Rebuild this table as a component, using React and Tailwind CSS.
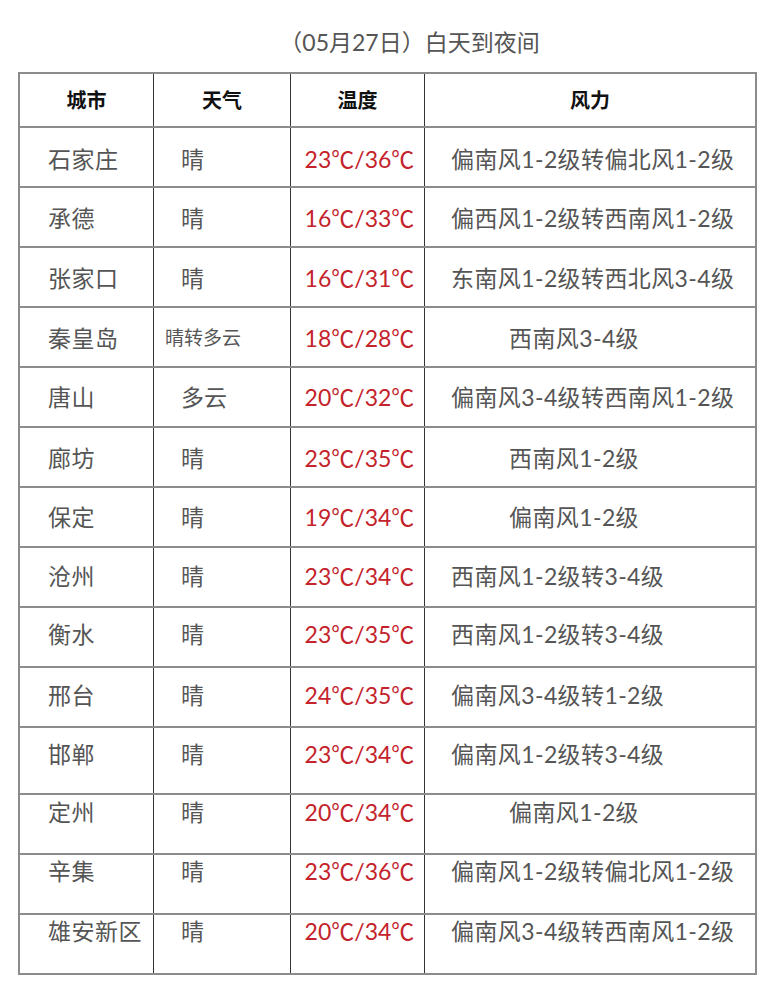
const rows = [
  { city: "石家庄", weather: "晴", temp: "23℃/36℃", wind: "偏南风1-2级转偏北风1-2级", pt: "pt-[16px]" },
  { city: "承德", weather: "晴", temp: "16℃/33℃", wind: "偏西风1-2级转西南风1-2级", pt: "pt-[15px]" },
  { city: "张家口", weather: "晴", temp: "16℃/31℃", wind: "东南风1-2级转西北风3-4级", pt: "pt-[15px]" },
  { city: "秦皇岛", weather: "晴转多云", temp: "18℃/28℃", wind: "西南风3-4级", indent: true, small: true, pt: "pt-[15px]" },
  { city: "唐山", weather: "多云", temp: "20℃/32℃", wind: "偏南风3-4级转西南风1-2级", pt: "pt-[14px]" },
  { city: "廊坊", weather: "晴", temp: "23℃/35℃", wind: "西南风1-2级", indent: true, pt: "pt-[15px]" },
  { city: "保定", weather: "晴", temp: "19℃/34℃", wind: "偏南风1-2级", indent: true, pt: "pt-[14px]" },
  { city: "沧州", weather: "晴", temp: "23℃/34℃", wind: "西南风1-2级转3-4级", pt: "pt-[13px]" },
  { city: "衡水", weather: "晴", temp: "23℃/35℃", wind: "西南风1-2级转3-4级", pt: "pt-[11px]" },
  { city: "邢台", weather: "晴", temp: "24℃/35℃", wind: "偏南风3-4级转1-2级", pt: "pt-[12px]" },
  { city: "邯郸", weather: "晴", temp: "23℃/34℃", wind: "偏南风1-2级转3-4级", pt: "pt-[11px]", tall: true },
  { city: "定州", weather: "晴", temp: "20℃/34℃", wind: "偏南风1-2级", indent: true, pt: "pt-[2px]" },
  { city: "辛集", weather: "晴", temp: "23℃/36℃", wind: "偏南风1-2级转偏北风1-2级", pt: "pt-[1px]" },
  { city: "雄安新区", weather: "晴", temp: "20℃/34℃", wind: "偏南风3-4级转西南风1-2级", pt: "pt-[1px]" },
];

const font = { fontFamily: '"Lato", "Noto Sans CJK SC", sans-serif' };

export default function App() {
  return (
    <div className="w-[773px] h-[1000px] bg-white pt-[26px]" style={font}>
      <div className="text-center text-[23px] leading-[32px] text-[#555] pl-[46px]">（05月27日）白天到夜间</div>
      <div className="ml-[18px] mt-[14px] w-[739px] border-2 border-[#8c8c8c]">
        {/* header */}
        <div className="flex h-[52px] items-center text-[20px] font-bold text-[#111]">
          <div className="w-[133px] text-center">城市</div>
          <div className="w-[137px] h-full flex items-center justify-center border-l border-[#333]">天气</div>
          <div className="w-[134px] h-full flex items-center justify-center border-l border-[#333]">温度</div>
          <div className="flex-1 h-full flex items-center justify-center border-l border-[#333]">风力</div>
        </div>
        {rows.map((r) => (
          <div
            key={r.city}
            className={
              "flex border-t-2 border-[#8c8c8c] text-[23px] leading-[30px] text-[#555] " +
              (r.tall ? "h-[67px]" : "h-[60px]")
            }
          >
            <div className={"w-[133px] pl-[28px] tracking-[0.5px] " + r.pt}>{r.city}</div>
            <div
              className={
                "w-[137px] border-l border-[#333] " +
                r.pt +
                (r.small ? " pl-[11px] text-[19px]" : " pl-[27px]")
              }
            >
              {r.weather}
            </div>
            <div className={"w-[134px] text-center border-l border-[#333] text-[#c4232b] pl-[4px] " + r.pt}>
              {r.temp}
            </div>
            <div
              className={
                "flex-1 border-l border-[#333] whitespace-nowrap tracking-[0.4px] " +
                r.pt +
                (r.indent ? " pl-[84px]" : " pl-[26px]")
              }
            >
              {r.wind}
            </div>
          </div>
        ))}
      </div>
    </div>
  );
}
